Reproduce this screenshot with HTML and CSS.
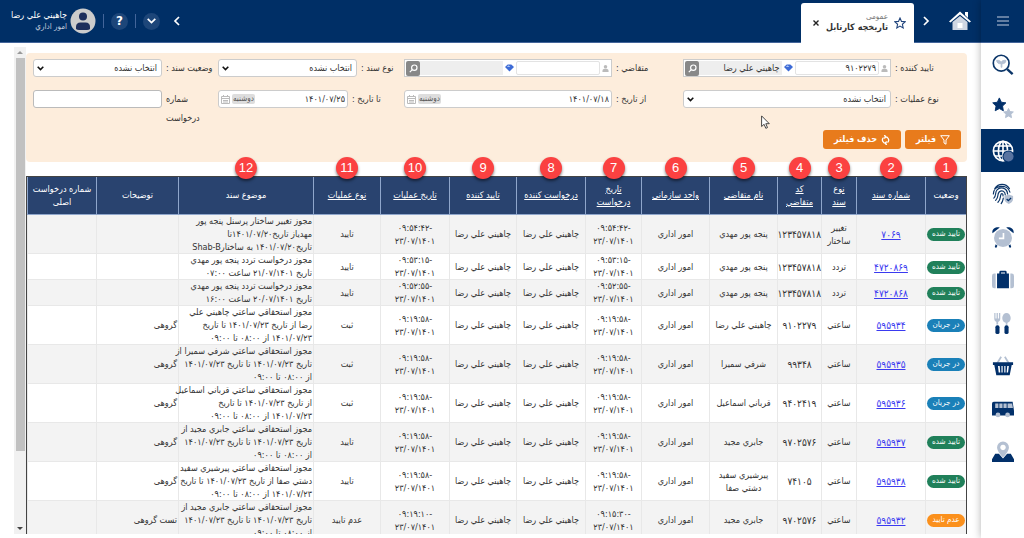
FILE: index.html
```html
<!DOCTYPE html>
<html lang="fa" dir="rtl">
<head>
<meta charset="utf-8">
<title>تاریخچه کارتابل</title>
<link rel="stylesheet" href="styles.css">
</head>
<body>
<div class="app">
<nav class="side">
  <button class="menu" aria-label="منو"><svg width="12" height="10" viewBox="0 0 12 10" stroke="#c3cddd" stroke-width="1.2"><path d="M0 1h12M0 5h12M0 9h12"/></svg></button>
  <a class="item" href="#" aria-label="جستجو"><svg viewBox="0 0 24 24"><path d="M10 14.500V10.500C7 11 5.300 9.500 5 7C7.500 6.500 9.300 7.500 10 9C10.700 7.500 12.500 6.500 15.200 7C15 9.500 13.200 11 10.800 10.500V14.500Z" fill="#b4c0d2" stroke="#b4c0d2"/><circle cx="10" cy="10" r="8.600" fill="none" stroke="#0b3568" stroke-width="1.800"/><path d="M16.500 16.500L22.500 22" stroke="#0b3568" stroke-width="2.600"/></svg></a>
  <a class="item" href="#" aria-label="علاقه‌مندی"><svg viewBox="0 0 24 24"><path fill="#02306a" stroke="#02306a" stroke-linejoin="round" d="M8 1l2.200 4.700 5 .7-3.700 3.500.9 5.100L8 12.600 3.500 15l.9-5.100L.8 6.400l5-.7z"/><path fill="#b4c0d2" stroke="#b4c0d2" stroke-linejoin="round" d="M18 12.500l1.600 3.300 3.700.5-2.700 2.500.7 3.700-3.300-1.800-3.300 1.800.7-3.700-2.700-2.500 3.700-.5z"/></svg></a>
  <a class="item active" href="#" aria-label="عمومی"><svg viewBox="0 0 24 24"><g fill="none" stroke="#fff" stroke-width="1.800"><circle cx="12" cy="12" r="10.500"/><ellipse cx="12" cy="12" rx="5" ry="10.500"/><path d="M12 1.500v21M1.500 12h21M3.300 6.500h17.400M3.300 17.500h17.400"/></g><circle cx="18" cy="18" r="6.600" fill="#02306a"/><circle cx="18" cy="18" r="5.500" fill="#5873a0"/></svg></a>
  <a class="item" href="#" aria-label="حضور"><svg viewBox="0 0 24 24"><g fill="none" stroke="#0b3568" stroke-width="1.300" stroke-linecap="round"><path d="M3 6C7 0 15 0 19 6M1.500 12C1.500 2 17 .5 19.500 10M2 16.500C5 14 3 10 5.500 7.500 9 3.500 16.500 5 17 12M4 19C8 15 5 12.500 8 9.500 11 7.300 14.500 9 14.500 13M6.500 21C10 18 8.500 14.500 10 12 11 11 12.300 12 12 14M10 22.500C12 20 12 18 12.300 16.500"/></g><path d="M18.300 12.500l4.700 1.700v3.300c0 2.500-2 4.300-4.700 5.500-2.700-1.200-4.700-3-4.700-5.500v-3.300z" fill="#b4c0d2"/><path d="M16 17.500l1.800 1.800 3-3" fill="none" stroke="#02306a" stroke-width="1.400"/></svg></a>
  <a class="item" href="#" aria-label="ساعت"><svg viewBox="0 0 24 24"><path d="M.5 8C-.5 3 4 .5 8.500 1.500zM23.500 8C24.500 3 20 .5 15.500 1.500zM4 20l2 1.500-1.500 2.500-1.500-1zM20 20l-2 1.500 1.500 2.500 1.500-1z" fill="#02306a"/><circle cx="12" cy="13" r="9.800" fill="#b4c0d2"/><path d="M12.500 7.500V13.500H7.500" fill="none" stroke="#fff" stroke-width="1.800"/></svg></a>
  <a class="item" href="#" aria-label="ماموریت"><svg viewBox="0 0 24 24"><path d="M4 5v16H2.500Q0 21 0 18.500v-11Q0 5 2.500 5zM20 5v16h1.500q2.500 0 2.500-2.500v-11Q24 5 21.500 5z" fill="#b4c0d2"/><path d="M5.500 5H8V3.500Q8 2 9.500 2h5Q16 2 16 3.500V5h2.500v16h-13zM9.800 5h4.400V3.800H9.800z" fill="#02306a"/></svg></a>
  <a class="item" href="#" aria-label="غذا"><svg viewBox="0 0 24 24"><path d="M2.500 1h1.300v6H5V1h1.400v6h1.200V1H9v7q0 2-2.300 3v2.500H4.800V11Q2.500 10 2.500 8z" fill="#b4c0d2"/><ellipse cx="15.800" cy="6.500" rx="4.600" ry="5.500" fill="#b4c0d2"/><path d="M15 11h1.800v3H15z" fill="#b4c0d2"/><rect x="3.700" y="14.500" width="4.500" height="9.500" rx="2" fill="#02306a"/><rect x="13.600" y="14.500" width="4.500" height="9.500" rx="2" fill="#02306a"/></svg></a>
  <a class="item" href="#" aria-label="فروشگاه"><svg viewBox="0 0 24 24"><path d="M5 10L10 2M19 10L14 2" stroke="#b4c0d2" stroke-width="1.900"/><path d="M1 8h22v3h-1.500L19.300 22H4.700L2.500 11H1zM6.500 12l.8 7H9l-.6-7zm3.800 0v7h1.300v-7zm3.100 0v7h1.300v-7zm3.200 0l-.6 7h1.500l.9-7z" fill="#02306a" fill-rule="evenodd"/></svg></a>
  <a class="item" href="#" aria-label="سرویس"><svg viewBox="0 0 24 24"><path d="M2 4h20.500L24 14v5H0V6Q0 4 2 4z" fill="#02306a"/><path d="M3.500 6H7v5H3.500zM8 6h3.500v5H8zM12.500 6H16v5h-3.500zM17 6h5l.8 5H17z" fill="#b4c0d2"/><circle cx="6.500" cy="18.500" r="2.600" fill="#b4c0d2"/><circle cx="17" cy="18.500" r="2.600" fill="#b4c0d2"/></svg></a>
  <a class="item" href="#" aria-label="موقعیت"><svg viewBox="0 0 24 24"><path d="M3.500 14h4l4.500 5 4.500-5h4L24 20v3H0v-3z" fill="#02306a"/><path d="M12 .5a6.500 6.500 0 0 1 6.500 6.500c0 4.500-6.500 11-6.500 11S5.500 11.500 5.500 7A6.500 6.500 0 0 1 12 .5zM12 4a3 3 0 1 0 .01 0z" fill="#b4c0d2" fill-rule="evenodd"/></svg></a>
</nav>

<div class="main">
  <header class="top">
    <a class="home" href="#" aria-label="خانه"><svg width="22" height="20" viewBox="0 0 22 20"><path d="M16 1h3v6l-3-3z" fill="#fff"/><path d="M0 10.500L11 .5l11 10-1.500 1L11 3.500 1.500 11.500z" fill="#fff"/><path d="M3.500 11L11 5l7.500 6v8h-15z" fill="#cfd6e2"/><path d="M8.500 12h5v5h-5z" fill="#fff"/></svg></a>
    <button class="plain" aria-label="بعدی"><svg width="7" height="10" viewBox="0 0 7 10"><path d="M1 1l4 4-4 4" fill="none" stroke="#fff" stroke-width="1.700"/></svg></button>
    <div class="tab">
      <svg class="fav" width="12" height="12" viewBox="0 0 24 24"><path d="M12 2l3 6.800 7.300.8-5.500 5 1.600 7.300L12 18.200l-6.400 3.700 1.600-7.300-5.500-5 7.300-.8z" fill="none" stroke="#1f437c" stroke-width="2.200"/></svg>
      <div class="tabtext"><span class="kind">عمومی</span><h1>تاریخچه کارتابل</h1></div>
      <button class="plain" aria-label="بستن"><svg width="6" height="6" viewBox="0 0 6 6"><path d="M.5.5l5 5M5.500.5l-5 5" stroke="#222" stroke-width="1.400"/></svg></button>
    </div>
    <div class="grow"></div>
    <button class="plain prev" aria-label="قبلی"><svg width="7" height="10" viewBox="0 0 7 10"><path d="M6 1L2 5l4 4" fill="none" stroke="#fff" stroke-width="1.700"/></svg></button>
    <button class="round" aria-label="بیشتر"><svg width="9" height="6" viewBox="0 0 9 6"><path d="M.7.800l3.800 3.800L8.300.800" fill="none" stroke="#fff" stroke-width="1.700"/></svg></button>
    <i class="sep"></i>
    <button class="round">?</button>
    <i class="sep"></i>
    <svg class="avatar" width="26" height="26" viewBox="0 0 26 26"><circle cx="13" cy="13" r="12.500" fill="#ccc"/><circle cx="13" cy="8.500" r="4" fill="#1d2e5c"/><path d="M6 21v-2q0-4.500 4.500-4.500h5q4.500 0 4.500 4.500v2q-1 1-3 1H9q-2 0-3-1z" fill="#1d2e5c"/></svg>
    <div class="user"><b>چاهيني علي رضا</b><span>امور اداري</span></div>
  </header>

  <div class="body">
    <div class="page">
      <form class="filter">
        <div class="row r1">
          <label for="f1">تایید کننده :</label>
          <div class="lookup"><svg class="person" viewBox="0 0 8 9"><circle cx="4" cy="2.500" r="2"/><path d="M.5 8.500V7Q.5 5 2.500 4.700h3Q7.500 5 7.500 7v1.500z"/></svg><input id="f1" value="۹۱۰۲۲۷۹"><svg class="gem" viewBox="0 0 10 8"><path d="M0 3l3-3h4l3 3-5 5z" fill="#3d6bd6"/><path d="M2 3l2-2 2 2z" fill="#a9c4f5"/></svg><output>چاهيني علي رضا</output><button type="button" aria-label="جستجو"><svg width="9" height="9" viewBox="0 0 9 9" fill="none" stroke="#fff" stroke-width="1.200"><circle cx="5.300" cy="3.700" r="2.700"/><path d="M3.300 5.700L.8 8.200"/></svg></button></div>
          <label for="f2">متقاضي :</label>
          <div class="lookup"><svg class="person" viewBox="0 0 8 9"><circle cx="4" cy="2.500" r="2"/><path d="M.5 8.500V7Q.5 5 2.500 4.700h3Q7.500 5 7.500 7v1.500z"/></svg><input id="f2"><svg class="gem" viewBox="0 0 10 8"><path d="M0 3l3-3h4l3 3-5 5z" fill="#3d6bd6"/><path d="M2 3l2-2 2 2z" fill="#a9c4f5"/></svg><output></output><button type="button" aria-label="جستجو"><svg width="9" height="9" viewBox="0 0 9 9" fill="none" stroke="#fff" stroke-width="1.200"><circle cx="5.300" cy="3.700" r="2.700"/><path d="M3.300 5.700L.8 8.200"/></svg></button></div>
          <label for="f3">نوع سند :</label>
          <div class="pick"><select id="f3"><option>انتخاب نشده</option></select><svg viewBox="0 0 7 5"><path d="M.7.700l2.800 2.800L6.300.700"/></svg></div>
          <label for="f4">وضعیت سند :</label>
          <div class="pick"><select id="f4"><option>انتخاب نشده</option></select><svg viewBox="0 0 7 5"><path d="M.7.700l2.800 2.800L6.300.700"/></svg></div>
        </div>
        <div class="row r2">
          <label for="f5">نوع عملیات :</label>
          <div class="pick"><select id="f5"><option>انتخاب نشده</option></select><svg viewBox="0 0 7 5"><path d="M.7.700l2.800 2.800L6.300.700"/></svg></div>
          <label for="f6">از تاریخ :</label>
          <div class="date"><input id="f6" value="۱۴۰۱/۰۷/۱۸"><span>دوشنبه</span><svg viewBox="0 0 9 9"><path d="M.5 1.500h8v7h-8zM.5 3.500h8M2.500 0v2M6.500 0v2M2 5.500h5M2 7h5"/></svg></div>
          <label for="f7">تا تاریخ :</label>
          <div class="date"><input id="f7" value="۱۴۰۱/۰۷/۲۵"><span>دوشنبه</span><svg viewBox="0 0 9 9"><path d="M.5 1.500h8v7h-8zM.5 3.500h8M2.500 0v2M6.500 0v2M2 5.500h5M2 7h5"/></svg></div>
          <label class="wrap" for="f8">شماره درخواست</label>
          <input class="text" id="f8">
        </div>
        <div class="actions">
          <button type="button"><svg width="10" height="10" viewBox="0 0 10 10" fill="none" stroke="#fff"><path d="M.7.700h8.600L6 5v4.200L4 8V5z"/></svg>فیلتر</button>
          <button type="button"><svg width="9" height="10" viewBox="0 0 9 10" fill="none" stroke="#fff" stroke-width="1.300"><path d="M3.500 1.800h.7A3.300 3.300 0 0 1 6.500 7.600M5.500 8.300H5A3.300 3.300 0 0 1 2.500 2.600M3.300 0l1.500 1.800L3.300 3.500M5.700 6.500L4.200 8.300 5.700 10"/></svg>حذف فیلتر</button>
          <svg class="cursor" width="9" height="14" viewBox="0 0 9 14"><path d="M.6.900v10.600L3.100 9.300l1.700 4 1.700-.7-1.700-3.900h3.500z" fill="#fff" stroke="#333" stroke-width=".9"/></svg>
        </div>
      </form>

      <table>
        <colgroup><col class="c1"><col class="c2"><col class="c3"><col class="c4"><col class="c5"><col class="c6"><col class="c7"><col class="c8"><col class="c9"><col class="c10"><col class="c11"><col class="c12"><col class="c13"><col class="c14"></colgroup>
        <thead><tr>
          <th><span class="n">1</span>وضعیت</th>
          <th><span class="n">2</span><a href="#">شماره سند</a></th>
          <th><span class="n">3</span><a href="#">نوع<br>سند</a></th>
          <th><span class="n">4</span><a href="#">کد<br>متقاضي</a></th>
          <th><span class="n">5</span><a href="#">نام متقاضي</a></th>
          <th><span class="n">6</span><a href="#">واحد سازماني</a></th>
          <th><span class="n">7</span><a href="#">تاریخ<br>درخواست</a></th>
          <th><span class="n">8</span><a href="#">درخواست کننده</a></th>
          <th><span class="n">9</span><a href="#">تایید کننده</a></th>
          <th><span class="n">10</span><a href="#">تاریخ عملیات</a></th>
          <th><span class="n">11</span><a href="#">نوع عملیات</a></th>
          <th><span class="n">12</span>موضوع سند</th>
          <th>توضیحات</th>
          <th>شماره درخواست<br>اصلی</th>
        </tr></thead>
        <tbody>
        <tr><td><span class="tag ok">تایید شده</span></td><td><a href="#">۷۰۶۹</a></td><td>تغییر ساختار</td><td>۱۲۳۴۵۷۸۱۸</td><td>پنجه پور مهدي</td><td>امور اداري</td><td>-۰۹:۵۴:۴۲<br>۲۳/۰۷/۱۴۰۱</td><td>چاهيني علي رضا</td><td>چاهيني علي رضا</td><td>-۰۹:۵۴:۴۲<br>۲۳/۰۷/۱۴۰۱</td><td>تایید</td><td>مجوز تغییر ساختار پرسنل پنجه پور<br>مهدیاز تاریخ۱۴۰۱/۰۷/۲۰تا<br>تاریخ۱۴۰۱/۰۷/۲۰ به ساختارShab-B</td><td></td><td></td></tr>
        <tr><td><span class="tag ok">تایید شده</span></td><td><a href="#">۴۷۲۰۸۶۹</a></td><td>تردد</td><td>۱۲۳۴۵۷۸۱۸</td><td>پنجه پور مهدي</td><td>امور اداري</td><td>-۰۹:۵۳:۱۵<br>۲۳/۰۷/۱۴۰۱</td><td>چاهيني علي رضا</td><td>چاهيني علي رضا</td><td>-۰۹:۵۳:۱۵<br>۲۳/۰۷/۱۴۰۱</td><td>تایید</td><td>مجوز درخواست تردد پنجه پور مهدي<br>تاریخ ۲۱/۰۷/۱۴۰۱ ساعت ۰۷:۰۰</td><td></td><td></td></tr>
        <tr><td><span class="tag ok">تایید شده</span></td><td><a href="#">۴۷۲۰۸۶۸</a></td><td>تردد</td><td>۱۲۳۴۵۷۸۱۸</td><td>پنجه پور مهدي</td><td>امور اداري</td><td>-۰۹:۵۲:۵۵<br>۲۳/۰۷/۱۴۰۱</td><td>چاهيني علي رضا</td><td>چاهيني علي رضا</td><td>-۰۹:۵۲:۵۵<br>۲۳/۰۷/۱۴۰۱</td><td>تایید</td><td>مجوز درخواست تردد پنجه پور مهدي<br>تاریخ ۲۰/۰۷/۱۴۰۱ ساعت ۱۶:۰۰</td><td></td><td></td></tr>
        <tr><td><span class="tag run">در جریان</span></td><td><a href="#">۵۹۵۹۳۴</a></td><td>ساعتي</td><td>۹۱۰۲۲۷۹</td><td>چاهيني علي رضا</td><td>امور اداري</td><td>-۰۹:۱۹:۵۸<br>۲۳/۰۷/۱۴۰۱</td><td>چاهيني علي رضا</td><td>چاهيني علي رضا</td><td>-۰۹:۱۹:۵۸<br>۲۳/۰۷/۱۴۰۱</td><td>ثبت</td><td>مجوز استحقاقي ساعتي چاهيني علي<br>رضا از تاریخ ۱۴۰۱/۰۷/۲۳ تا تاریخ<br>۱۴۰۱/۰۷/۲۳ از ۰۸:۰۰ تا ۰۹:۰۰</td><td>گروهی</td><td></td></tr>
        <tr><td><span class="tag run">در جریان</span></td><td><a href="#">۵۹۵۹۳۵</a></td><td>ساعتي</td><td>۹۹۳۴۸</td><td>شرفي سمیرا</td><td>امور اداري</td><td>-۰۹:۱۹:۵۸<br>۲۳/۰۷/۱۴۰۱</td><td>چاهيني علي رضا</td><td>چاهيني علي رضا</td><td>-۰۹:۱۹:۵۸<br>۲۳/۰۷/۱۴۰۱</td><td>ثبت</td><td>مجوز استحقاقي ساعتي شرفي سمیرا از<br>تاریخ ۱۴۰۱/۰۷/۲۳ تا تاریخ ۱۴۰۱/۰۷/۲۳<br>از ۰۸:۰۰ تا ۰۹:۰۰</td><td>گروهی</td><td></td></tr>
        <tr><td><span class="tag run">در جریان</span></td><td><a href="#">۵۹۵۹۳۶</a></td><td>ساعتي</td><td>۹۴۰۲۴۱۹</td><td>قرباني اسماعیل</td><td>امور اداري</td><td>-۰۹:۱۹:۵۸<br>۲۳/۰۷/۱۴۰۱</td><td>چاهيني علي رضا</td><td>چاهيني علي رضا</td><td>-۰۹:۱۹:۵۸<br>۲۳/۰۷/۱۴۰۱</td><td>ثبت</td><td>مجوز استحقاقي ساعتي قرباني اسماعیل<br>از تاریخ ۱۴۰۱/۰۷/۲۳ تا تاریخ<br>۱۴۰۱/۰۷/۲۳ از ۰۸:۰۰ تا ۰۹:۰۰</td><td>گروهی</td><td></td></tr>
        <tr><td><span class="tag ok">تایید شده</span></td><td><a href="#">۵۹۵۹۳۷</a></td><td>ساعتي</td><td>۹۷۰۲۵۷۶</td><td>جابري مجید</td><td>امور اداري</td><td>-۰۹:۱۹:۵۸<br>۲۳/۰۷/۱۴۰۱</td><td>چاهيني علي رضا</td><td>چاهيني علي رضا</td><td>-۰۹:۱۹:۵۸<br>۲۳/۰۷/۱۴۰۱</td><td>تایید</td><td>مجوز استحقاقي ساعتي جابري مجید از<br>تاریخ ۱۴۰۱/۰۷/۲۳ تا تاریخ ۱۴۰۱/۰۷/۲۳<br>از ۰۸:۰۰ تا ۰۹:۰۰</td><td>گروهی</td><td></td></tr>
        <tr><td><span class="tag ok">تایید شده</span></td><td><a href="#">۵۹۵۹۳۸</a></td><td>ساعتي</td><td>۷۴۱۰۵</td><td>پیرشیري سفید دشتي صفا</td><td>امور اداري</td><td>-۰۹:۱۹:۵۸<br>۲۳/۰۷/۱۴۰۱</td><td>چاهيني علي رضا</td><td>چاهيني علي رضا</td><td>-۰۹:۱۹:۵۸<br>۲۳/۰۷/۱۴۰۱</td><td>تایید</td><td>مجوز استحقاقي ساعتي پیرشیري سفید<br>دشتي صفا از تاریخ ۱۴۰۱/۰۷/۲۳ تا تاریخ<br>۱۴۰۱/۰۷/۲۳ از ۰۸:۰۰ تا ۰۹:۰۰</td><td>گروهی</td><td></td></tr>
        <tr><td><span class="tag no">عدم تایید</span></td><td><a href="#">۵۹۵۹۳۲</a></td><td>ساعتي</td><td>۹۷۰۲۵۷۶</td><td>جابري مجید</td><td>امور اداري</td><td>-۰۹:۱۵:۳۰<br>۲۳/۰۷/۱۴۰۱</td><td>چاهيني علي رضا</td><td>چاهيني علي رضا</td><td>-۰۹:۱۹:۱۰<br>۲۳/۰۷/۱۴۰۱</td><td>عدم تایید</td><td>مجوز استحقاقي ساعتي جابري مجید از<br>تاریخ ۱۴۰۱/۰۷/۲۳ تا تاریخ ۱۴۰۱/۰۷/۲۳<br>از ۰۸:۰۰ تا ۰۹:۰۰</td><td>تست گروهی</td><td></td></tr>
        </tbody>
      </table>
    </div>
    <div class="bar"><svg width="6" height="3" viewBox="0 0 6 3"><path d="M0 3l3-3 3 3z" fill="#999"/></svg><div class="thumb"></div><svg width="6" height="3" viewBox="0 0 6 3"><path d="M0 0h6L3 3z" fill="#444"/></svg></div>
  </div>
</div>
</div>
</body>
</html>
```

FILE: styles.css
```css
* { box-sizing: border-box; }
body { margin: 0; font: 9px/13px "DejaVu Sans Condensed", "DejaVu Sans", sans-serif; color: #333; background: #fff; }
button, input, select { font: inherit; color: inherit; margin: 0; padding: 0; border: 0; }
svg { display: block; flex: none; }
.app { display: flex; height: 100vh; overflow: hidden; }

.side { flex: none; width: 43px; background: #fff; box-shadow: 0 0 8px rgba(0,0,0,.3); z-index: 2; }
.menu { display: flex; width: 100%; height: 43px; align-items: center; justify-content: center; background: #002f66; border-bottom: 1px solid #43659a; }
.item { display: flex; height: 43px; align-items: center; justify-content: center; }
.item svg { width: 22px; height: 22px; }
.item.active { background: #002f66; }

.main { flex: 1; min-width: 0; display: flex; flex-direction: column; }
.top { flex: none; display: flex; align-items: center; height: 43px; padding: 0 10px 0 11px; background: #002f66; border-bottom: 1px solid #43659a; color: #fff; }
.plain { display: flex; background: none; }
.home { margin-left: 19px; }
.tab { align-self: stretch; display: flex; align-items: center; width: 113px; margin: 3px 9px -1px 0; padding: 0 8px 0 12px; background: #fff; border-radius: 3px 3px 0 0; color: #333; }
.tabtext { flex: 1; margin-right: 6px; white-space: nowrap; }
.kind { display: block; font-size: 8px; line-height: 9px; color: #777; }
.tab h1 { margin: 0; font-size: 9px; line-height: 13px; }
.grow { flex: 1; }
.prev { margin-left: 13px; }
.round { display: flex; align-items: center; justify-content: center; width: 17px; height: 17px; border-radius: 50%; background: #1d4679; font: bold 12px "DejaVu Sans", sans-serif; }
.sep { width: 1px; height: 14px; margin: 0 7px; background: #43659a; }
.avatar { margin-left: 3px; }
.user { display: flex; flex-direction: column; width: 56px; white-space: nowrap; }
.user b { font-weight: normal; line-height: 12px; }
.user span { font-size: 8px; line-height: 12px; color: #c3cddd; }

.body { flex: 1; min-height: 0; display: flex; padding: 4px 14px 4px; }
.page { flex: 1; min-width: 0; overflow: hidden; padding-top: 6px; }
.bar { flex: none; display: flex; flex-direction: column; align-items: center; justify-content: space-between; width: 12px; padding: 4px 0; background: #f1f1f1; }
.thumb { flex: 1; width: 9px; margin: 4px 0 76px; background: #c1c1c1; }

.filter { background: #fdeddc; border-radius: 4px; padding: 6px 0 13px 7px; }
.row { display: grid; column-gap: 4px; align-items: start; }
.r1 { grid-template-columns: 72px 208fr 63px 208fr 39px 139fr 48px 129fr; height: 31px; }
.r2 { grid-template-columns: 72px 208fr 63px 208fr 48px 130fr 48px 129fr; height: 40px; }
.row label { text-align: left; line-height: 18px; white-space: nowrap; }
.row label.wrap { justify-self: end; width: min-content; white-space: normal; line-height: 19px; }
.pick, .date, .text, .lookup { height: 18px; background: #fff; border: 1px solid #ccc; border-radius: 3px; min-width: 0; width: 100%; }
.text { border-color: #bbb; }
.pick { display: grid; align-items: center; }
.pick select, .pick svg { grid-area: 1 / 1; }
.pick select { appearance: none; width: 100%; height: 16px; padding: 0 4px; background: none; }
.pick svg { justify-self: end; width: 7px; height: 5px; margin-left: 3px; fill: none; stroke: #111; stroke-width: 1.6px; pointer-events: none; }
.date { display: flex; align-items: center; gap: 2px; padding: 0 2px; }
.date input { flex: 1; min-width: 0; background: none; }
.date span { font-size: 8px; line-height: 10px; padding: 0 1px; background: #ddd; border-radius: 2px; color: #555; }
.date svg { width: 9px; height: 9px; fill: none; stroke: #bbb; }
.lookup { display: flex; align-items: center; border-radius: 0; gap: 2px; padding: 0 2px 0 1px; }
.person { width: 7px; height: 9px; fill: #bbb; }
.gem { width: 9px; height: 8px; }
.lookup input { flex: 1; min-width: 0; height: 14px; padding: 0 2px; border: 1px solid #e3e3e3; border-radius: 2px; }
.lookup output { flex: 1; min-width: 0; height: 14px; line-height: 14px; padding: 0 2px; background: #eee; white-space: nowrap; margin-left: -2px; }
.lookup button { display: flex; align-items: center; justify-content: center; width: 14px; height: 15px; background: #888; border-radius: 2px; }
.actions { position: relative; display: flex; gap: 4px; padding-right: 6px; }
.actions button { display: flex; align-items: center; justify-content: center; gap: 4px; width: 56px; height: 19px; background: #e87b1c; border-radius: 3px; color: #fff; font-weight: bold; }
.actions button + button { width: 78px; }
.cursor { position: absolute; right: 197px; top: -15px; }

table { width: 100%; margin-top: 14px; table-layout: fixed; border-collapse: separate; border-spacing: 0; border: 1px solid #444; border-width: 1px 1px 0; }
.c1 { width: 41px; } .c2 { width: 69px; } .c3 { width: 35px; } .c4 { width: 44px; } .c5 { width: 68px; } .c6 { width: 68px; } .c7 { width: 56px; }
.c8 { width: 69px; } .c9 { width: 67px; } .c10 { width: 69px; } .c11 { width: 67px; } .c12 { width: 135px; } .c13 { width: 82px; } .c14 { width: 69px; }
th { position: relative; height: 38px; padding: 0; background: #29436f; color: #fff; font-weight: normal; white-space: nowrap; border-left: 1px solid #8fa6cb; border-bottom: 1px solid #8fa6cb; }
th a { color: inherit; }
td { height: 26px; padding: 0; text-align: center; border-left: 1px solid #e8e8e8; box-shadow: inset 0 -1px #e8e8e8; }
td:nth-child(2), td:nth-child(4) { font-size: 10px; }
td a { color: #3a3af0; }
tbody tr:nth-child(odd) { background: #f3f3f3; }
td:nth-child(12), td:nth-child(13) { text-align: right; white-space: nowrap; padding-right: 1px; }
.n { position: absolute; left: 50%; top: -20px; width: 22px; height: 22px; margin-left: -11px; border-radius: 50%; background: #fb4141; box-shadow: 0 2px 3px rgba(0,0,0,.5); font: 13px/22px "Liberation Sans", sans-serif; }
.tag { display: block; height: 13px; margin: 0 1px; border-radius: 7px; color: #fff; font-size: 8px; line-height: 12px; white-space: nowrap; }
.ok { background: #20805a; }
.run { background: #1a80b8; }
.no { background: #fb901c; }
```
